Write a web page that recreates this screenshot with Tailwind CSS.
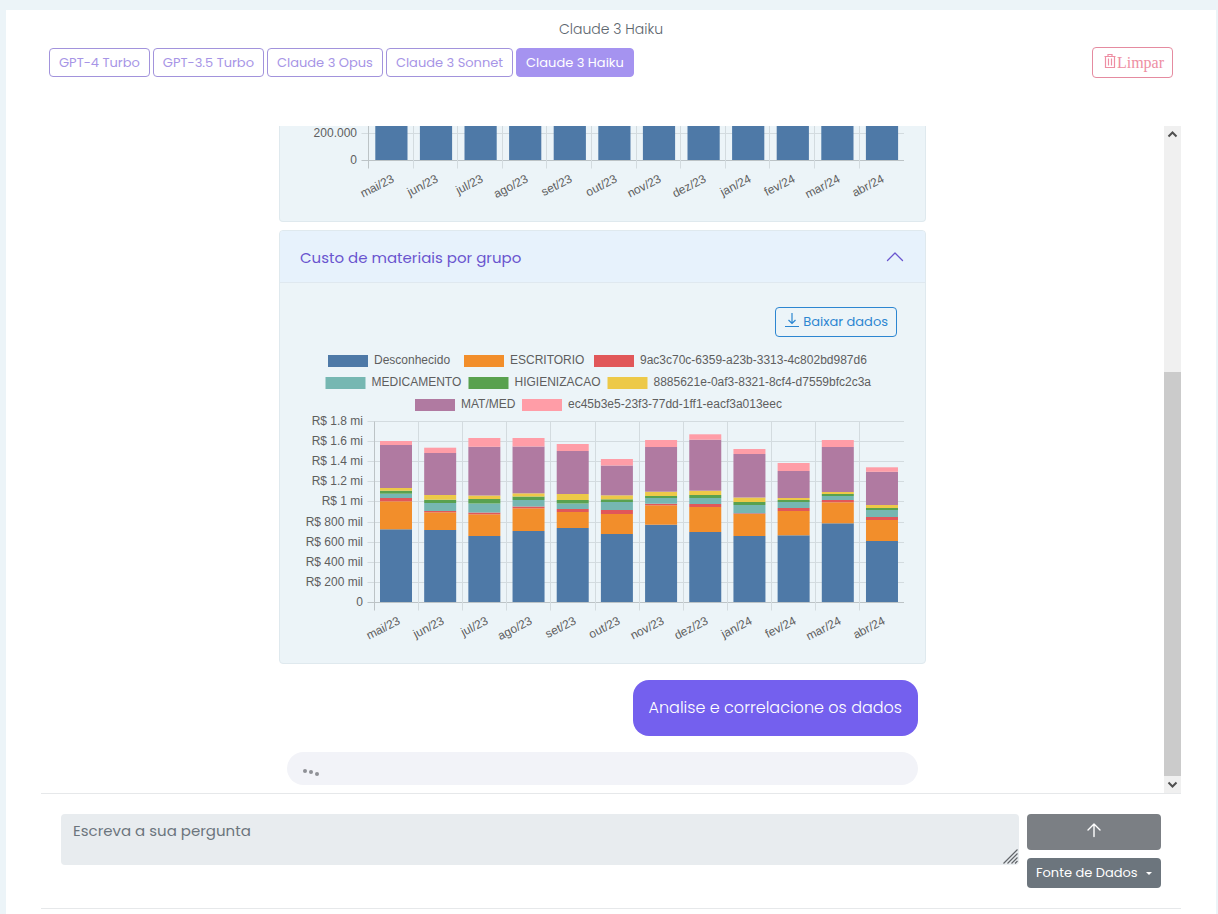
<!DOCTYPE html>
<html lang="pt-BR">
<head>
<meta charset="utf-8">
<meta name="viewport" content="width=device-width, initial-scale=1">
<title>Claude 3 Haiku</title>
<script src="https://cdn.jsdelivr.net/npm/@tailwindcss/browser@4"></script>
</head>
<body class="min-h-screen overflow-hidden bg-[#ecf4f8] pt-[10px] pr-[2px] pl-[6px] font-[Poppins,Inter,sans-serif] text-[#6c757d]">
<main class="min-h-screen bg-white px-[35px] pt-[7px]">
  <h1 class="text-center text-[14px] leading-6 font-light text-[#5c656d]">Claude 3 Haiku</h1>

  <div class="flex items-start justify-between px-2 pt-[5px]">
    <nav class="mt-[2px] flex gap-[3px] text-[13px] leading-[27px] text-[#a795e6]" aria-label="Modelos">
      <button type="button" class="rounded border border-[#a293dc] px-[9px]">GPT-4 Turbo</button>
      <button type="button" class="rounded border border-[#a293dc] px-[9px]">GPT-3.5 Turbo</button>
      <button type="button" class="rounded border border-[#a293dc] px-[9px]">Claude 3 Opus</button>
      <button type="button" class="rounded border border-[#a293dc] px-[9px]">Claude 3 Sonnet</button>
      <button type="button" class="rounded border border-[#a593f0] bg-[#a593f0] px-[9px] text-white" aria-pressed="true">Claude 3 Haiku</button>
    </nav>
    <button type="button" class="mt-[1px] flex h-[31px] items-center rounded border border-[#e58ba0] pr-2 pl-[10px] font-['Liberation_Serif',serif] text-[16px] text-[#ee8ea3]">
      <svg class="mb-1 h-4 w-[14px]" viewBox="0 0 14 16" fill="none" stroke="currentColor" stroke-width="1.200" aria-hidden="true"><path d="M1.500 3.500h11M5 3V1.500h4V3M2.500 3.500v11h9v-11M5.500 5.500v7M8.500 5.500v7"/></svg>Limpar
    </button>
  </div>

  <div class="mt-12 flex h-[668px] border-b border-[#e6e8ea]">
    <section class="min-w-0 flex-1 overflow-hidden" aria-label="Conversa">
      <div class="mx-auto max-w-[647px]">
        <article class="overflow-hidden rounded-b border border-t-0 border-[#dfe9ee] bg-[#ecf4f8]">
          <svg id="chart-volume" class="block w-full" viewBox="280 126 645 95" font-family="Liberation Sans, Arial, sans-serif" font-size="12" fill="#5e5e5e" role="img" aria-label="Gráfico mensal"></svg>
        </article>

        <article class="mt-2 overflow-hidden rounded border border-[#dfe9ee] bg-[#ecf4f8]">
          <h2>
            <button type="button" aria-expanded="true" class="flex h-[52px] w-full items-center justify-between border-b border-[#dfe8ef] bg-[#e7f2fc] pt-[3px] pr-5 pl-5 text-[15px] text-[#6a55cf]">
              Custo de materiais por grupo
              <svg class="h-5 w-5" viewBox="0 0 20 20" fill="none" stroke="currentColor" stroke-width="1.300" stroke-linecap="round" stroke-linejoin="round" aria-hidden="true"><path d="M2.500 12.500 10 5l7.500 7.500"/></svg>
            </button>
          </h2>
          <div class="flex justify-end pt-6 pr-7">
            <button type="button" class="flex h-[30px] items-center gap-[3px] rounded border border-[#2c86d1] px-2 text-[13px] text-[#2c86d1]">
              <svg class="mb-1 h-4 w-4" viewBox="0 0 16 16" fill="none" stroke="currentColor" stroke-width="1.200" aria-hidden="true"><path d="M8 1v10.500M4.500 8 8 11.500 11.500 8M1 14.500h14"/></svg>Baixar dados
            </button>
          </div>
          <svg id="chart-custo" class="block w-full" viewBox="280 337 645 326" font-family="Liberation Sans, Arial, sans-serif" font-size="12" fill="#5e5e5e" role="img" aria-label="Custo de materiais por grupo"></svg>
        </article>

        <div class="flex flex-col gap-4 px-2 pt-4">
          <p class="self-end rounded-2xl bg-[#7460ee] px-4 py-4 text-[16px] leading-6 font-light text-white">Analise e correlacione os dados</p>
          <div class="flex h-[33px] items-center rounded-full bg-[#f2f3f8] px-4" role="status" aria-label="Digitando">
            <svg class="mt-2 h-2 w-4" viewBox="0 0 16 8" fill="#8f9196" aria-hidden="true"><circle cx="2" cy="2" r="2"/><circle cx="8" cy="3" r="2"/><circle cx="14" cy="5" r="2"/></svg>
          </div>
        </div>
      </div>
    </section>

    <div class="flex w-[17px] flex-col bg-[#f0f0f0] text-[#505050]" aria-hidden="true">
      <svg class="h-[17px] w-[17px]" viewBox="0 0 17 17" fill="none" stroke="currentColor" stroke-width="2"><path d="M4.500 10.500l4-4 4 4"/></svg>
      <div class="mt-[229px] flex-1 bg-[#cbcbcb]"></div>
      <svg class="h-[17px] w-[17px]" viewBox="0 0 17 17" fill="none" stroke="currentColor" stroke-width="2"><path d="M4.500 6.500l4 4 4-4"/></svg>
    </div>
  </div>

  <form class="flex items-start gap-2 border-b border-[#e6e8ea] px-5 py-5">
    <div class="relative flex flex-1">
      <textarea disabled aria-label="Pergunta" placeholder="Escreva a sua pergunta" class="h-[51px] flex-1 resize-none rounded bg-[#e8ecef] px-3 py-[5px] text-[15px] leading-6 placeholder:text-[#6c757d]"></textarea>
      <svg class="absolute right-px bottom-px h-[15px] w-[15px]" viewBox="0 0 15 15" fill="none" stroke="#62666a" stroke-width="1.200" aria-hidden="true"><path d="M.5 14.500l14-14M4.500 14.500l10-10M8.500 14.500l6-6M12 14.500l2.500-2.500"/></svg>
    </div>
    <div class="flex w-[134px] flex-col gap-2 text-white">
      <button type="submit" aria-label="Enviar" class="flex h-9 items-center justify-center rounded bg-[#7b7f84]">
        <svg class="mb-1 h-4 w-4" viewBox="0 0 16 16" fill="none" stroke="currentColor" stroke-width="1.400" stroke-linecap="round" stroke-linejoin="round" aria-hidden="true"><path d="M8 14.500V2M2 8l6-6 6 6"/></svg>
      </button>
      <button type="button" aria-haspopup="true" class="flex h-[30px] items-center justify-between rounded bg-[#6c757d] px-[9px] text-[13px]">
        Fonte de Dados
        <svg class="h-[3px] w-[6px]" viewBox="0 0 6 3" fill="currentColor" aria-hidden="true"><path d="M0 0h6L3 3z"/></svg>
      </button>
    </div>
  </form>
</main>

<script>
const months = ['mai/23','jun/23','jul/23','ago/23','set/23','out/23','nov/23','dez/23','jan/24','fev/24','mar/24','abr/24'];
const blue = '#4e79a7';
const rect = (x, y, w, h, c) => `<rect x="${x}" y="${y}" width="${w}" height="${h}" fill="${c}"/>`;
const line = (x1, y1, x2, y2, c) => `<path d="M${x1} ${y1}L${x2} ${y2}" stroke="${c}"/>`;
const label = (x, y, t) => `<text x="${x}" y="${y}" text-anchor="end">${t}</text>`;

function axes(left, step, top, bottom, ticks) {
  let out = '';
  ticks.forEach(([y, t]) => {
    out += line(left - 7, y, 904, y, y === bottom ? '#bcc3c6' : '#d3dbdf') + label(left - 11.5, y + 3, t);
  });
  months.forEach((m, i) => {
    const x = Math.round(left + i * step - .5) + .5;
    out += line(x, top, x, bottom + 8, i ? '#d3dbdf' : '#bcc3c6');
    const cx = Math.round(left + (i + .5) * step);
    out += `<text transform="translate(${cx + 4} ${bottom + 21}) rotate(-27)" text-anchor="end">${m}</text>`;
  });
  return out;
}

let out = axes(368.5, 44.6, 100, 160.5, [[133.5, '200.000'], [160.5, '0']]);
months.forEach((m, i) => { out += rect(375.3 + i * 44.6, 100, 32.2, 60, blue); });
document.getElementById('chart-volume').innerHTML = out;

const series = [
  ['Desconhecido', blue, 328, 355], ['ESCRITORIO', '#f28e2b', 464, 355], ['9ac3c70c-6359-a23b-3313-4c802bd987d6', '#e15759', 594, 355],
  ['MEDICAMENTO', '#76b7b2', 325.5, 377], ['HIGIENIZACAO', '#59a14f', 468.5, 377], ['8885621e-0af3-8321-8cf4-d7559bfc2c3a', '#edc948', 607.5, 377],
  ['MAT/MED', '#b07aa1', 415, 399], ['ec45b3e5-23f3-77dd-1ff1-eacf3a013eec', '#ff9da7', 522, 399]
];
// Upper edge of every stacked segment, first series to last.
const stacks = [
  [529.3,501.3,498,493.7,490.7,488,445,441], [530,512.3,511,503,499.7,495,453,447.7],
  [536,514.3,512.5,503.5,499,495.5,446.8,438], [531,508.3,506.5,500,496.5,493.3,446.5,438],
  [528,512,509,503.5,500,494,451,444], [534,514,510,502,499.3,495.3,465.5,459],
  [524.7,505.3,503.7,498,496,491.7,447,440], [532,507,504,498,495,490.7,439.7,434.3],
  [536,514,513.3,505,502,497.5,454,449], [535.3,511,508,502,500,498,471,463],
  [523.3,502.3,500,496,494,492,447,440], [541,520,517,510,508,505,471.8,467.3]
];
out = series.map(([t, c, x, y]) => rect(x, y, 40, 12, c) + `<text x="${x + 46}" y="${y + 9}">${t}</text>`).join('');
out += axes(374.5, 44.1, 421.5, 602.5, [
  [421.5,'R$ 1.8 mi'],[441.5,'R$ 1.6 mi'],[461.5,'R$ 1.4 mi'],[481.5,'R$ 1.2 mi'],[501.5,'R$ 1 mi'],
  [522.5,'R$ 800 mil'],[542.5,'R$ 600 mil'],[562.5,'R$ 400 mil'],[582.5,'R$ 200 mil'],[602.5,'0']
]);
stacks.forEach((tops, i) => {
  let base = 602;
  tops.forEach((y, k) => { out += rect(380 + i * 44.18, y, 32, base - y, series[k][1]); base = y; });
});
document.getElementById('chart-custo').innerHTML = out;
</script>
</body>
</html>
